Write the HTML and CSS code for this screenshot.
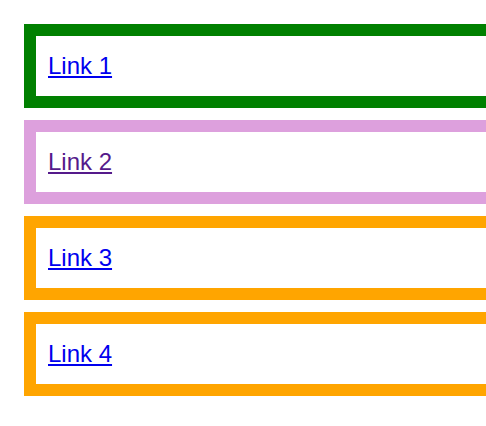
FILE: index.html
```html
<!DOCTYPE html>
<html>
<head>
<meta charset="utf-8">
<link rel="stylesheet" href="styles.css">
</head>
<body>
<div class="list">
  <div class="item green"><a class="link" href="#1">Link 1</a></div>
  <div class="item plum"><a class="link visited" href="#2">Link 2</a></div>
  <div class="item orange"><a class="link" href="#3">Link 3</a></div>
  <div class="item orange"><a class="link" href="#4">Link 4</a></div>
</div>
</body>
</html>
```
FILE: styles.css
```css
html, body {
  margin: 0;
  padding: 0;
  overflow: hidden;
  background: #fff;
}
body {
  padding: 24px 0 0 24px;
  font-family: "Liberation Sans", Arial, sans-serif;
}
.list {
  display: flex;
  flex-direction: column;
  gap: 12px;
  margin-right: -200px;
}
.item {
  display: flex;
  align-items: center;
  height: 60px;
  padding: 0 12px;
  border: 12px solid;
}
.green { border-color: #008000; }
.plum { border-color: #dda0dd; }
.orange { border-color: #ffa500; }
.link {
  font-size: 24px;
  color: #0000ee;
  text-decoration: underline;
}
.link.visited { color: #551a8b; }
```
